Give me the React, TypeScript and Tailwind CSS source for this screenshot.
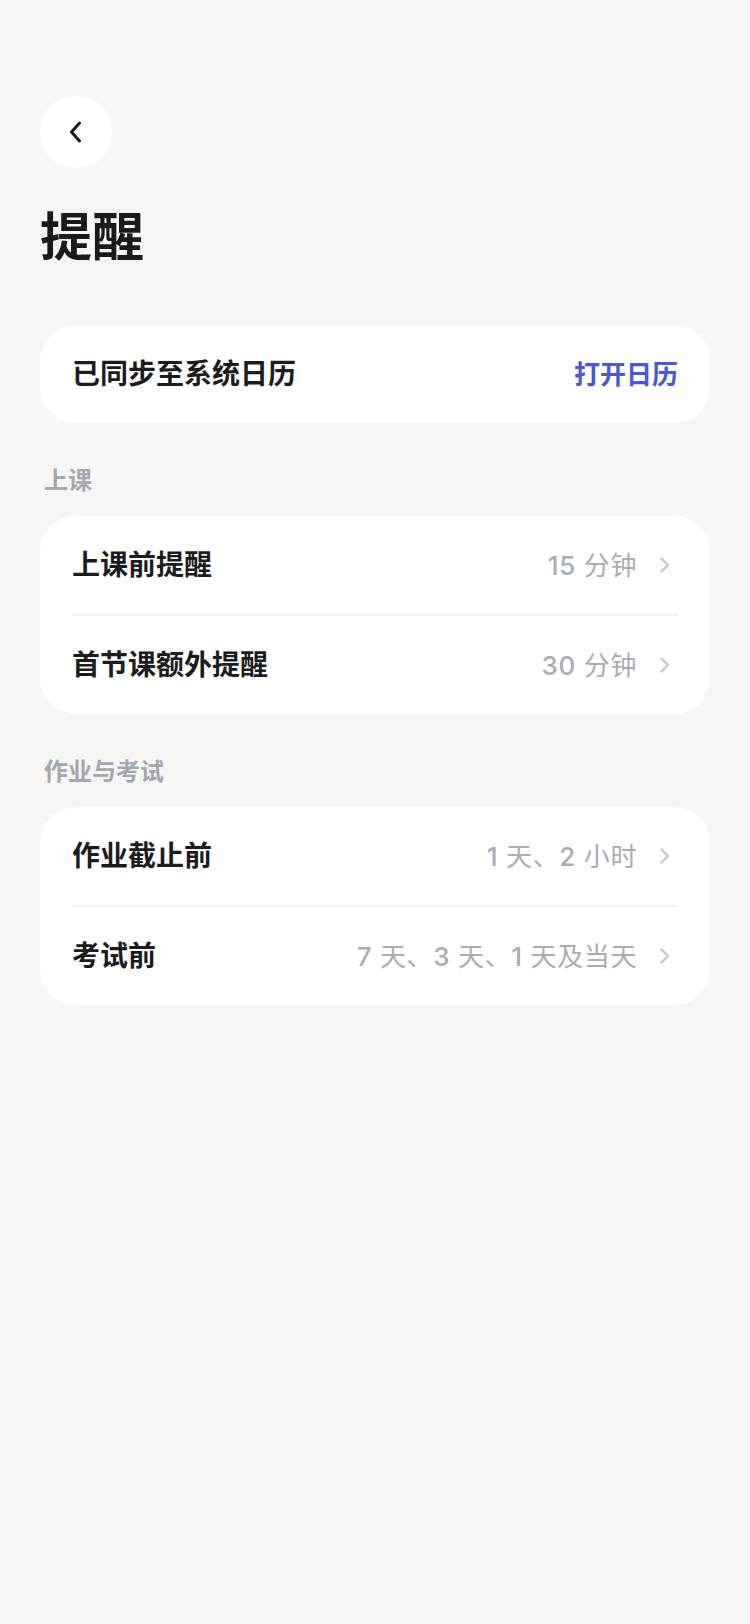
const font = { fontFamily: 'Inter, "Noto Sans CJK SC", sans-serif' }

type Row = { label: string; value: string }

const Chevron = () => (
  <svg width="12" height="16" viewBox="0 0 12 16" fill="none" className="ml-[22px] mr-[7px]">
    <path d="M2.5 1.5 9 8l-6.5 6.5" stroke="#c5c8ce" strokeWidth="2.4" strokeLinecap="round" strokeLinejoin="round" />
  </svg>
)

const Value = ({ text }: { text: string }) => {
  const parts = text.split(/(\d+)/)
  return (
    <span className="text-[26px] text-[#a8acb4] tracking-[0.6px]">
      {parts.map((p, i) =>
        /^\d+$/.test(p) ? (
          <span key={i} className="font-medium">
            {p}
          </span>
        ) : (
          <span key={i}>{p}</span>
        ),
      )}
    </span>
  )
}

const Section = ({ title, rows }: { title: string; rows: Row[] }) => {
  return (
    <div>
      <div className="mt-[41px] mb-[18px] pl-[4px] text-[24px] leading-[34px] font-semibold text-[#a3a7ae]">{title}</div>
      <div className="bg-white rounded-[36px] px-[32px]">
        {rows.map((r, i) => (
          <div key={r.label}>
            {i > 0 && <div className="h-[2px] bg-[#f2f2f2]" />}
            <div className="h-[98px] flex items-center justify-between">
              <span className="text-[28px] font-bold text-[#1c1c1e]">{r.label}</span>
              <div className="flex items-center">
                <Value text={r.value} />
                <Chevron />
              </div>
            </div>
          </div>
        ))}
      </div>
    </div>
  )
}

export default function App() {
  return (
    <div className="min-h-[1624px] w-[750px] bg-[#f6f6f4] px-[40px] pt-[96px]" style={font}>
      <button className="w-[72px] h-[72px] rounded-full bg-white flex items-center justify-center">
        <svg width="16" height="22" viewBox="0 0 16 22" fill="none">
          <path d="M11.5 2 3.5 11l8 9" stroke="#1c1c1e" strokeWidth="3" strokeLinecap="round" strokeLinejoin="round" />
        </svg>
      </button>

      <h1 className="mt-[38px] text-[52px] leading-[64px] font-bold text-[#1a1a1a]">提醒</h1>

      <div className="mt-[55px] bg-white rounded-[36px] h-[98px] px-[32px] flex items-center justify-between">
        <span className="text-[28px] font-bold text-[#1c1c1e]">已同步至系统日历</span>
        <span className="text-[26px] font-semibold text-[#4c56d8]">打开日历</span>
      </div>

      <Section
        title="上课"
        rows={[
          { label: "上课前提醒", value: "15 分钟" },
          { label: "首节课额外提醒", value: "30 分钟" },
        ]}
      />

      <Section
        title="作业与考试"
        rows={[
          { label: "作业截止前", value: "1 天、2 小时" },
          { label: "考试前", value: "7 天、3 天、1 天及当天" },
        ]}
      />
    </div>
  )
}
